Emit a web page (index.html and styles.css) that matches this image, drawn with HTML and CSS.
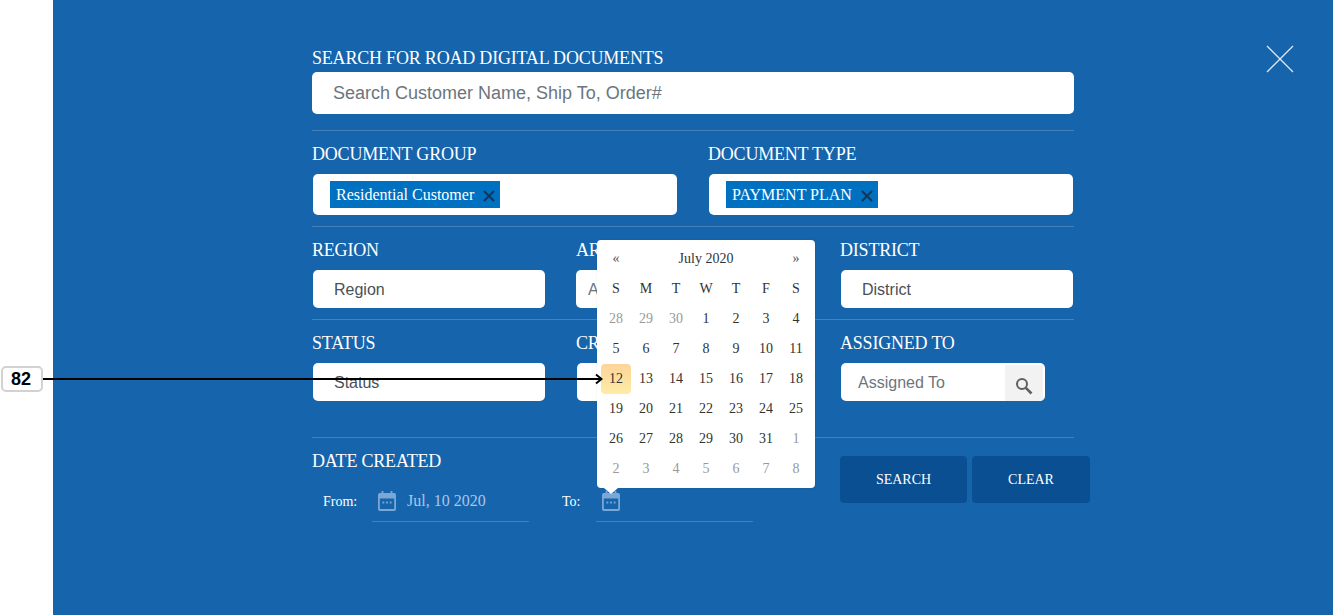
FILE: index.html
```html
<!DOCTYPE html>
<html lang="en">
<head>
    <meta charset="UTF-8">
    <meta name="viewport" content="width=device-width, initial-scale=1.0">
    <title>Road Digital Documents</title>
    <link rel="stylesheet" href="styles.css">
</head>
<body>
    <div class="panel">
        <!-- Close button -->
        <svg class="close" width="28" height="28" viewBox="0 0 28 28">
            <path d="M1 1L27 27M27 1L1 27" stroke="#dbe7f3" stroke-width="1.3" fill="none"/>
        </svg>

        <form class="search-form">
            <!-- Free text search -->
            <div class="row row-top">
                <label class="title">SEARCH FOR ROAD DIGITAL DOCUMENTS</label>
                <input class="search-input" type="text" placeholder="Search Customer Name, Ship To, Order#">
            </div>

            <!-- Document group and type -->
            <div class="row row-two">
                <div>
                    <label class="title">DOCUMENT GROUP</label>
                    <div class="tag-box">
                        <span class="tag">Residential Customer
                            <svg width="12" height="12" viewBox="0 0 12 12"><path d="M1 1L11 11M11 1L1 11" stroke="#12355b" stroke-width="2"/></svg>
                        </span>
                    </div>
                </div>
                <div>
                    <label class="title">DOCUMENT TYPE</label>
                    <div class="tag-box">
                        <span class="tag">PAYMENT PLAN
                            <svg width="12" height="12" viewBox="0 0 12 12"><path d="M1 1L11 11M11 1L1 11" stroke="#12355b" stroke-width="2"/></svg>
                        </span>
                    </div>
                </div>
            </div>

            <!-- Region, area, district -->
            <div class="row row-three">
                <div>
                    <label class="title">REGION</label>
                    <div class="field">Region</div>
                </div>
                <div>
                    <label class="title">AREA</label>
                    <div class="field field-area">Area</div>
                </div>
                <div>
                    <label class="title">DISTRICT</label>
                    <div class="field">District</div>
                </div>
            </div>

            <!-- Status, created by, assigned to -->
            <div class="row row-three row-tall">
                <div>
                    <label class="title">STATUS</label>
                    <div class="field">Status</div>
                </div>
                <div>
                    <label class="title">CREATED BY</label>
                    <div class="field">Created By</div>
                </div>
                <div>
                    <label class="title">ASSIGNED TO</label>
                    <div class="assigned">
                        <input class="assigned-input" type="text" placeholder="Assigned To">
                        <span class="assigned-btn">
                            <svg width="18" height="18" viewBox="0 0 18 18">
                                <circle cx="7" cy="7" r="5" stroke="#5f5f5f" stroke-width="2" fill="none"/>
                                <path d="M10.8 10.8L16.5 16.5" stroke="#5f5f5f" stroke-width="2.6"/>
                            </svg>
                        </span>
                    </div>
                </div>
            </div>

            <!-- Date range and actions -->
            <div class="row row-bottom">
                <div class="dates">
                    <label class="title">DATE CREATED</label>
                    <div class="date-row">
                        <span class="date-label date-from">From:</span>
                        <div class="date-field date-field-from">
                            <svg width="18" height="20" viewBox="0 0 20 21" preserveAspectRatio="none">
                                <path fill-rule="evenodd" fill="#7ba7d6" d="M4 0h2v2h8V0h2v2h2a2 2 0 0 1 2 2v15a2 2 0 0 1-2 2H2a2 2 0 0 1-2-2V4a2 2 0 0 1 2-2h2zM2 8v11h16V8z"/>
                                <path fill="#7ba7d6" d="M5 11h2v2H5zM9 11h2v2H9zM13 11h2v2h-2z"/>
                            </svg>
                            <span class="date-value">Jul, 10 2020</span>
                        </div>
                        <span class="date-label date-to">To:</span>
                        <div class="date-field date-field-to">
                            <svg width="18" height="20" viewBox="0 0 20 21" preserveAspectRatio="none">
                                <path fill-rule="evenodd" fill="#7ba7d6" d="M4 0h2v2h8V0h2v2h2a2 2 0 0 1 2 2v15a2 2 0 0 1-2 2H2a2 2 0 0 1-2-2V4a2 2 0 0 1 2-2h2zM2 8v11h16V8z"/>
                                <path fill="#7ba7d6" d="M5 11h2v2H5zM9 11h2v2H9zM13 11h2v2h-2z"/>
                            </svg>

                            <!-- Date picker popup -->
                            <div class="calendar">
                                <div class="cal-head">
                                    <span class="cal-nav">«</span>
                                    <span class="cal-month">July 2020</span>
                                    <span class="cal-nav">»</span>
                                </div>
                                <div class="cal-grid">
                                    <span>S</span><span>M</span><span>T</span><span>W</span><span>T</span><span>F</span><span>S</span>
                                    <span class="off">28</span><span class="off">29</span><span class="off">30</span><span>1</span><span>2</span><span>3</span><span>4</span>
                                    <span>5</span><span>6</span><span>7</span><span>8</span><span>9</span><span>10</span><span>11</span>
                                    <span class="today">12</span><span>13</span><span>14</span><span>15</span><span>16</span><span>17</span><span>18</span>
                                    <span>19</span><span>20</span><span>21</span><span>22</span><span>23</span><span>24</span><span>25</span>
                                    <span>26</span><span>27</span><span>28</span><span>29</span><span>30</span><span>31</span><span class="off">1</span>
                                    <span class="off">2</span><span class="off">3</span><span class="off">4</span><span class="off">5</span><span class="off">6</span><span class="off">7</span><span class="off">8</span>
                                </div>
                            </div>
                        </div>
                    </div>
                </div>
                <div class="actions">
                    <button class="btn btn-search" type="button">SEARCH</button>
                    <button class="btn btn-clear" type="button">CLEAR</button>
                </div>
            </div>
        </form>
    </div>

    <!-- Annotation marker -->
    <div class="marker">82</div>
    <svg class="marker-line" width="560" height="12" viewBox="0 0 560 12">
        <path d="M0 6H558" stroke="#000" stroke-width="2"/>
        <path d="M553 1.5L558.5 6L553 10.5" stroke="#000" stroke-width="2" fill="none"/>
    </svg>
</body>
</html>
```

FILE: styles.css
```css
* {
    box-sizing: border-box;
}

body {
    margin: 0;
    height: 615px;
    overflow: hidden;
    background-color: white;
    font-family: "Liberation Serif", serif;
}

.panel {
    position: relative;
    margin-left: 53px;
    height: 615px;
    padding: 48px 0 0 259px;
    background-color: #1664ac;
}

.close {
    position: absolute;
    left: 1213px;
    top: 45px;
}

.search-form {
    width: 762px;
}

.title {
    display: block;
    height: 20px;
    line-height: 20px;
    font-size: 18px;
    letter-spacing: -0.2px;
    color: white;
    white-space: nowrap;
}

.row {
    border-top: 1px solid #4381bc;
    padding-top: 13px;
}

.row-top {
    border-top: none;
    padding: 0 0 16px;
}

.row-two {
    display: grid;
    grid-template-columns: 366px 366px;
    column-gap: 30px;
    padding-bottom: 11px;
}

.row-three {
    display: grid;
    grid-template-columns: 234px 234px 234px;
    column-gap: 30px;
    padding-bottom: 11px;
}

.row-tall {
    padding-bottom: 36px;
}

.search-input {
    display: block;
    width: 100%;
    height: 42px;
    margin-top: 4px;
    padding: 0 21px;
    border: none;
    border-radius: 5px;
    background: white;
    font-family: "Liberation Sans", sans-serif;
    font-size: 18px;
}

.search-input::placeholder,
.assigned-input::placeholder {
    color: #6c757d;
    opacity: 1;
}

.tag-box {
    display: flex;
    align-items: center;
    height: 41px;
    margin: 10px 1px 0;
    padding-left: 17px;
    border-radius: 5px;
    background: white;
}

.tag {
    display: flex;
    align-items: center;
    height: 27px;
    padding: 0 5px 0 6px;
    background-color: #0070c0;
    color: white;
    font-size: 16px;
    white-space: nowrap;
}

.tag svg {
    margin: 3px 0 0 9px;
}

.field {
    height: 38px;
    line-height: 40px;
    margin: 10px 1px 0;
    padding-left: 21px;
    border-radius: 5px;
    background: white;
    color: #495057;
    font-family: "Liberation Sans", sans-serif;
    font-size: 16px;
}

.field-area {
    margin-left: 0;
    padding-left: 12px;
    color: #6c757d;
}

.assigned {
    display: flex;
    width: 204px;
    height: 38px;
    margin: 10px 0 0 1px;
    border-radius: 5px;
    background: white;
    overflow: hidden;
}

.assigned-input {
    flex: 1;
    min-width: 0;
    padding: 2px 0 0 17px;
    border: none;
    background: transparent;
    font-family: "Liberation Sans", sans-serif;
    font-size: 16px;
}

.assigned-btn {
    display: flex;
    align-items: center;
    justify-content: center;
    width: 38px;
    height: 36px;
    margin: 2px 2px 0 0;
    padding-top: 5px;
    background-color: #f2f2f2;
}

.row-bottom {
    display: flex;
}

.dates {
    flex: none;
    width: 528px;
}

.date-row {
    display: flex;
    align-items: center;
    height: 41px;
    margin-top: 10px;
    color: white;
}

.date-label {
    padding-top: 1px;
    font-size: 14px;
}

.date-from {
    width: 49px;
    margin-left: 11px;
}

.date-to {
    width: 34px;
    margin-left: 33px;
}

.date-field {
    position: relative;
    display: flex;
    align-items: center;
    width: 157px;
    height: 41px;
    padding-left: 6px;
    border-bottom: 1px solid #4381bc;
}

.date-value {
    margin-left: 11px;
    font-size: 16px;
    color: #a9c6e6;
}

.actions {
    flex: none;
    display: flex;
    gap: 5px;
    height: 47px;
    margin-top: 5px;
}

.btn {
    height: 47px;
    padding: 0;
    border: none;
    border-radius: 4px;
    background-color: #0a4f91;
    color: white;
    font-family: "Liberation Serif", serif;
    font-size: 14px;
    cursor: pointer;
}

.btn-search {
    width: 127px;
}

.btn-clear {
    width: 118px;
}

/* date picker */
.calendar {
    position: absolute;
    left: 1px;
    bottom: 33px;
    width: 218px;
    height: 248px;
    padding: 4px 4px 0;
    border-radius: 4px;
    background: white;
    box-shadow: 0 0 1px rgba(0, 0, 0, 0.25);
    color: #333;
    font-size: 14px;
}

.calendar::after {
    content: "";
    position: absolute;
    left: 7px;
    bottom: -6px;
    border-left: 7px solid transparent;
    border-right: 7px solid transparent;
    border-top: 6px solid white;
}

.cal-head {
    display: flex;
    justify-content: space-between;
    align-items: center;
    height: 30px;
}

.cal-nav {
    width: 30px;
    text-align: center;
    color: #555;
}

.cal-month {
    color: #333;
}

.cal-grid {
    display: grid;
    grid-template-columns: repeat(7, 30px);
    grid-auto-rows: 30px;
}

.cal-grid span {
    display: flex;
    align-items: center;
    justify-content: center;
}

.cal-grid .off {
    color: #999;
}

.cal-grid .today {
    border-radius: 4px;
    background: linear-gradient(#fdd49a, #fdeca6);
}

/* annotation */
.marker {
    position: absolute;
    left: 1px;
    top: 366px;
    width: 42px;
    height: 26px;
    line-height: 23px;
    padding-right: 2px;
    border: 2px solid #d2d2d2;
    border-radius: 5px;
    background: white;
    color: black;
    text-align: center;
    font-family: "Liberation Sans", sans-serif;
    font-weight: bold;
    font-size: 18px;
}

.marker-line {
    position: absolute;
    left: 43px;
    top: 373px;
}
```
